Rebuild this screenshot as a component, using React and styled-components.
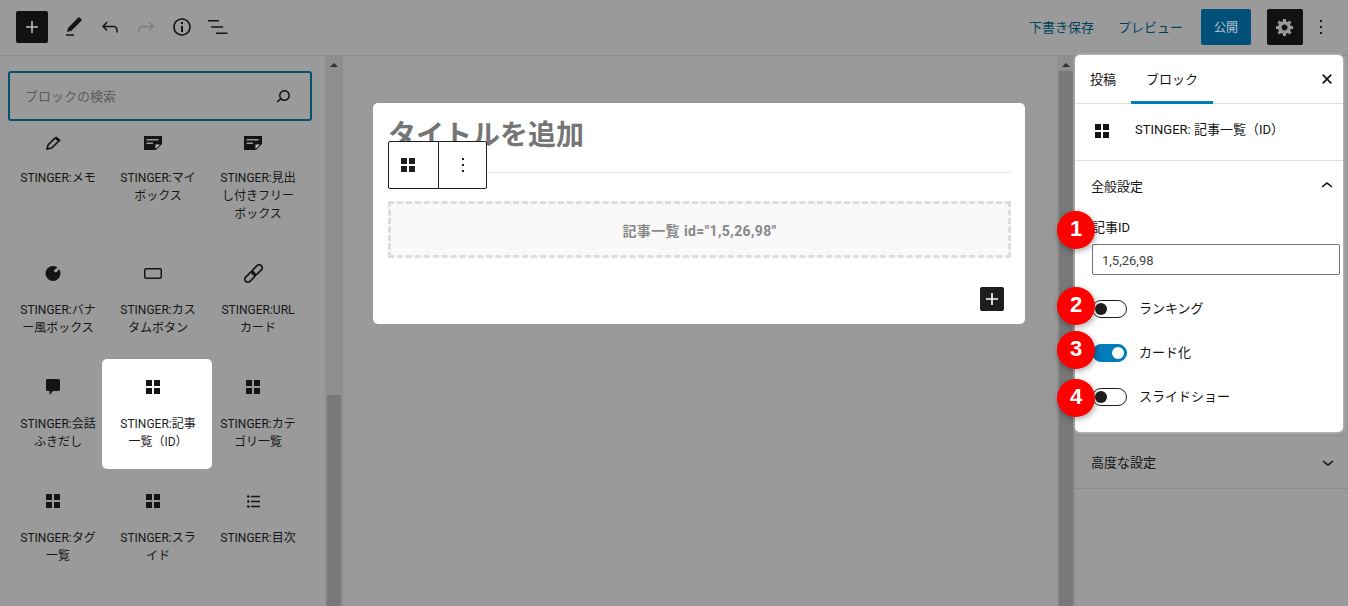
import React from "react"
import styled, { createGlobalStyle } from "styled-components"

const Global = createGlobalStyle`
  html, body, #root {
    height: 100%;
    margin: 0;
  }
  body {
    overflow: hidden;
    background: #9a9a9a;
    font-family: Roboto, "Noto Sans CJK JP", sans-serif;
    color: #141414;
    font-size: 13px;
  }
  * { box-sizing: border-box; }
`

const Page = styled.div`
  height: 100vh;
  display: flex;
  flex-direction: column;
`

const Header = styled.header`
  height: 56px;
  flex: none;
  display: flex;
  align-items: center;
  padding: 0 9px 2px 16px;
  border-bottom: 1px solid #8a8a8a;
`

const ToolGroup = styled.div`
  display: flex;
  align-items: center;
`

const InsertButton = styled.div`
  width: 32px;
  height: 32px;
  margin-right: 8px;
  background: #111;
  color: #bbb;
  border-radius: 2px;
  display: flex;
  align-items: center;
  justify-content: center;
`

const ToolIcon = styled.div`
  width: 36px;
  height: 36px;
  display: flex;
  align-items: center;
  justify-content: center;
  color: ${p => (p.$muted ? "#7c7c7c" : "#141414")};
`

const Actions = styled.div`
  margin-left: auto;
  display: flex;
  align-items: center;
`

const TextAction = styled.span`
  color: #00435f;
  font-size: 13px;
  margin-right: ${p => p.$gap}px;
`

const PublishButton = styled.div`
  width: 50px;
  height: 36px;
  margin-right: 16px;
  background: #00507a;
  color: #b9c9d3;
  border-radius: 2px;
  font-size: 12px;
  display: flex;
  align-items: center;
  justify-content: center;
`

const GearButton = styled.div`
  width: 36px;
  height: 36px;
  background: #111;
  color: #999;
  border-radius: 2px;
  display: flex;
  align-items: center;
  justify-content: center;
`

const Body = styled.div`
  flex: 1;
  min-height: 0;
  display: flex;
`

const Inserter = styled.aside`
  width: 343px;
  flex: none;
  display: flex;
  border-right: 1px solid #8a8a8a;
  overflow: hidden;
`

const InserterContent = styled.div`
  width: 325px;
  flex: none;
  padding: 15px 0 0 8px;
`

const SearchBox = styled.div`
  position: relative;
  width: 304px;
  height: 50px;
  border: 2px solid #00506f;
  border-radius: 3px;
  display: flex;
  align-items: center;
  padding: 0 15px 0 15px;
`

const SearchInput = styled.input`
  flex: 1;
  min-width: 0;
  border: 0;
  outline: 0;
  padding: 0;
  background: transparent;
  font: inherit;
  color: #141414;
  &::placeholder { color: #5c5c5c; opacity: 1; }
`

const BlockGrid = styled.div`
  margin-top: -6px;
  display: grid;
  grid-template-columns: repeat(3, 100px);
  grid-template-rows: 130px 114px 114px 114px;
`

const BlockCell = styled.div`
  position: relative;
  padding-top: 18px;
  display: flex;
  flex-direction: column;
  align-items: center;
  text-align: center;

  ${p => p.$active && `
    &::before {
      content: "";
      position: absolute;
      top: 0;
      left: -6px;
      width: 110px;
      height: 110px;
      background: #fff;
      border-radius: 5px;
    }
  `}
`

const BlockIcon = styled.div`
  position: relative;
  width: 24px;
  height: 20px;
  margin-left: -10px;
  display: flex;
  align-items: center;
  justify-content: center;
  color: #141414;
`

const BlockLabel = styled.div`
  position: relative;
  margin-top: ${p => (p.$tight ? 16 : 18)}px;
  width: 96px;
  font-size: 12px;
  line-height: 18px;
  word-spacing: -3px;
  white-space: pre-line;
  color: ${p => (p.$active ? "#1e1e1e" : "#161616")};
`

const ScrollTrack = styled.div`
  width: 17px;
  flex: none;
  display: flex;
  flex-direction: column;
  align-items: center;
  background: #8f8f8f;
`

const ScrollArrow = styled.div`
  flex: none;
  width: 0;
  height: 0;
  margin: 7px 0 ${p => p.$after}px;
  border-left: 4px solid transparent;
  border-right: 4px solid transparent;
  border-bottom: 4px solid #303030;
`

const ScrollThumb = styled.div`
  width: 14px;
  flex: 1;
  background: #787878;
`

const Canvas = styled.main`
  flex: 1;
  min-width: 0;
  padding: 47px 0 0 30px;
`

const EditorCard = styled.section`
  position: relative;
  width: 652px;
  height: 221px;
  padding: 0 14px 0 15px;
  background: #fff;
  border-radius: 5px;
`

const TitleWrap = styled.div`
  height: 70px;
  padding-top: 13px;
  border-bottom: 1px solid #e6e6e6;
`

const PostTitle = styled.h1`
  margin: 0;
  font-size: 28px;
  line-height: 40px;
  font-weight: 700;
  color: #757575;
`

const BlockToolbar = styled.div`
  position: absolute;
  top: 38px;
  left: 15px;
  width: 99px;
  height: 48px;
  display: flex;
  background: #fff;
  border: 1px solid #1e1e1e;
  border-radius: 2px;
`

const ToolbarSlot = styled.div`
  flex: none;
  width: 49px;
  display: flex;
  align-items: center;
  justify-content: center;
  padding-right: ${p => p.$shift || 0}px;
  color: #1e1e1e;
  & + & { border-left: 1px solid #1e1e1e; }
`

const Placeholder = styled.div`
  margin-top: 28px;
  height: 57px;
  background: #f9f9f9;
  border: 3px dashed #ddd;
  display: flex;
  align-items: center;
  justify-content: center;
  color: #888;
  font-size: 14px;
  font-weight: 700;
  letter-spacing: 0.4px;
`

const CardFooter = styled.div`
  margin-top: 29px;
  display: flex;
  justify-content: flex-end;
  padding-right: 7px;
`

const AddBlock = styled.div`
  width: 24px;
  height: 24px;
  background: #1e1e1e;
  color: #fff;
  border-radius: 2px;
  display: flex;
  align-items: center;
  justify-content: center;
`

const Settings = styled.aside`
  width: 274px;
  flex: none;
  border-left: 1px solid #8a8a8a;
`

const SpotCard = styled.div`
  position: relative;
  width: 268px;
  height: 377px;
  margin-top: -1px;
  background: #fff;
  border-radius: 5px;
  box-shadow: 0 0 3px rgba(255, 255, 255, 0.7);
`

const Tabs = styled.div`
  height: 49px;
  display: flex;
  align-items: stretch;
  border-bottom: 1px solid #e0e0e0;
  padding-left: 15px;
`

const Tab = styled.div`
  display: flex;
  align-items: center;
  width: ${p => p.$width}px;
  padding-left: ${p => p.$pad}px;
  height: 49px;
  border-bottom: 3px solid ${p => (p.$active ? "#007cba" : "transparent")};
`

const CloseIcon = styled.div`
  margin-left: auto;
  margin-right: 11px;
  display: flex;
  align-items: center;
  padding-bottom: 1px;
`

const BlockCardRow = styled.div`
  height: 57px;
  display: flex;
  align-items: flex-start;
  padding: 20px 0 0 20px;
  border-bottom: 1px solid #e0e0e0;
`

const BlockName = styled.span`
  margin-left: 26px;
  margin-top: -3px;
  line-height: 18px;
`

const PanelHead = styled.div`
  height: ${p => p.$height}px;
  display: flex;
  align-items: center;
  justify-content: space-between;
  padding: 0 4px 0 16px;
`

const PanelTitle = styled.span`
  margin-top: -2px;
`

const FieldList = styled.div`
  padding-left: 17px;
`

const Field = styled.div`
  position: relative;
`

const FieldLabel = styled.div`
  line-height: 18px;
  margin-top: 8px;
  margin-bottom: 7px;
`

const IdInput = styled.input`
  display: block;
  width: 248px;
  height: 31px;
  padding: 1px 9px 0;
  border: 1px solid #757575;
  border-radius: 2px;
  font: inherit;
  color: #444;
  outline: 0;
`

const ToggleRow = styled.div`
  position: relative;
  height: 18px;
  margin-top: ${p => p.$top}px;
  display: flex;
  align-items: center;
`

const ToggleLabel = styled.span`
  margin-top: -4px;
`

const Track = styled.span`
  position: relative;
  flex: none;
  width: 35px;
  height: 18px;
  margin-right: 12px;
  border-radius: 9px;
  border: 1px solid ${p => (p.$on ? "#007cba" : "#1e1e1e")};
  background: ${p => (p.$on ? "#007cba" : "#fff")};
`

const Knob = styled.span`
  position: absolute;
  top: 2px;
  left: ${p => (p.$on ? 19 : 2)}px;
  width: 12px;
  height: 12px;
  border-radius: 50%;
  background: ${p => (p.$on ? "#fff" : "#1e1e1e")};
`

const Badge = styled.span`
  position: absolute;
  left: -35px;
  top: ${p => p.$top}px;
  width: 38px;
  height: 38px;
  border-radius: 50%;
  background: #f00;
  color: #fff;
  font-family: "Liberation Sans", sans-serif;
  font-weight: 700;
  font-size: 22px;
  display: flex;
  align-items: center;
  justify-content: center;
  padding-bottom: 3px;
  box-shadow: 1px 2px 6px rgba(0, 0, 0, 0.35);
`

const CollapsedPanel = styled.div`
  margin-top: 3px;
  height: 54px;
  border-top: 1px solid #8a8a8a;
  border-bottom: 1px solid #8a8a8a;
  display: flex;
  align-items: center;
  justify-content: space-between;
  padding: 0 8px 0 16px;
`

const Svg = ({ d, size = 24, box = 24 }) => (
  <svg width={size} height={size} viewBox={`0 0 ${box} ${box}`} fill="currentColor">
    <path d={d} />
  </svg>
)

const PLUS = "M18 11.2h-5.2V6h-1.6v5.2H6v1.6h5.2V18h1.6v-5.2H18z"
const EDIT = "M20.1 5.1L16.9 2 6.2 12.7l-1.3 4.4 4.5-1.3L20.1 5.1zM4 20.8h8v-1.5H4v1.5z"
const UNDO = "M18.3 11.7c-.6-.6-1.4-.9-2.3-.9H6.7l2.9-3.3-1.1-1-4.5 5L8.5 16l1-1-2.7-2.7H16c.5 0 .9.2 1.3.5 1 1 1 3.4 1 4.5v.3h1.5v-.2c0-1.5 0-4.3-1.5-5.7z"
const REDO = "M15.6 6.5l-1.1 1 2.9 3.3H8c-.9 0-1.7.3-2.3.9-1.4 1.5-1.4 4.2-1.4 5.6v.2h1.5v-.3c0-1.1 0-3.5 1-4.5.3-.3.7-.5 1.3-.5h9.2L14.5 15l1.1 1.1 4.6-4.6-4.6-5z"
const INFO = "M12 3.2c-4.8 0-8.8 3.9-8.8 8.8 0 4.8 3.9 8.8 8.8 8.8 4.8 0 8.8-3.9 8.8-8.8 0-4.8-4-8.8-8.8-8.8zm0 16c-4 0-7.2-3.3-7.2-7.2C4.8 8 8 4.8 12 4.8s7.2 3.3 7.2 7.2c0 4-3.2 7.2-7.2 7.2zM11 17h2v-6h-2v6zm0-8h2V7h-2v2z"
const LIST = "M2 5h11v1.5H2zM5 11.2h12v1.5H5zM10 17.5h11.5V19H10z"
const MORE = "M13 19h-2v-2h2v2zm0-6h-2v-2h2v2zm0-6h-2V5h2v2z"
const GEAR = "M18 12h-2.18c-.17.7-.44 1.35-.81 1.93l1.54 1.54-2.1 2.1-1.54-1.54c-.58.36-1.23.63-1.91.79V19H8v-2.18c-.68-.16-1.33-.43-1.91-.79l-1.54 1.54-2.12-2.12 1.54-1.54c-.36-.58-.63-1.23-.79-1.91H1V9.03h2.17c.16-.7.44-1.35.8-1.94L2.43 5.55l2.1-2.1 1.54 1.54c.58-.37 1.24-.64 1.93-.81V2h3v2.18c.68.16 1.33.43 1.91.79l1.54-1.54 2.12 2.12-1.54 1.54c.36.59.64 1.24.8 1.94H18V12zm-8.5 1.5c1.66 0 3-1.34 3-3s-1.34-3-3-3-3 1.34-3 3 1.34 3 3 3z"
const SEARCH = "M13.5 6C10.5 6 8 8.5 8 11.5c0 1.1.3 2.1.9 3l-3.4 3 1 1.1 3.4-2.9c1 .9 2.2 1.4 3.6 1.4 3 0 5.5-2.5 5.5-5.5C19 8.5 16.5 6 13.5 6zm0 9.5c-2.2 0-4-1.8-4-4s1.8-4 4-4 4 1.8 4 4-1.8 4-4 4z"
const UP = "M6.5 12.4L12 8l5.5 4.4-.9 1.2L12 10l-4.5 3.6-1-1.2z"
const DOWN = "M17.5 11.6L12 16l-5.5-4.4.9-1.2L12 14l4.5-3.6 1 1.2z"

const CrossIcon = () => (
  <svg width="10" height="10" viewBox="0 0 10 10" fill="none" stroke="currentColor" strokeWidth="1.7">
    <path d="M.7.7l8.6 8.6M9.3.7L.7 9.3" />
  </svg>
)

const GridIcon = () => (
  <svg width="14" height="14" viewBox="0 0 14 14" fill="currentColor">
    <rect width="6" height="6" />
    <rect x="8" width="6" height="6" />
    <rect y="8" width="6" height="6" />
    <rect x="8" y="8" width="6" height="6" />
  </svg>
)

const PencilIcon = () => (
  <svg width="15" height="14" viewBox="0 0 15 14">
    <path fill="none" stroke="currentColor" strokeWidth="1.6" d="M1 13l1.2-4.3L9.3 1.9l3.5 3.1-7.1 7z" />
    <path fill="currentColor" d="M10.3.4l4.4 3.6-1.6 1.8-4.2-3.7z" />
  </svg>
)

const NoteIcon = () => (
  <svg width="18" height="14" viewBox="0 0 18 14">
    <path fill="currentColor" d="M0 0h18v8l-6 6H0z" />
    <path fill="#9a9a9a" d="M2.5 3h12v1.5h-12zM2.500 6.500H9V8H2.500z" />
    <path fill="#bdbdbd" d="M11.5 13V8.500H16z" />
  </svg>
)

const BlobIcon = () => (
  <svg width="16" height="16" viewBox="0 0 16 16">
    <circle cx="8" cy="8.5" r="7.5" fill="currentColor" />
    <ellipse cx="11.5" cy="5" rx="3" ry="1.5" fill="#9a9a9a" transform="rotate(-40 11.5 5)" />
  </svg>
)

const ButtonIcon = () => (
  <svg width="18" height="11" viewBox="0 0 18 11" fill="none" stroke="currentColor" strokeWidth="1.5">
    <rect x="0.75" y="0.75" width="16.5" height="9.5" rx="1.5" />
  </svg>
)

const ChainIcon = () => (
  <svg width="19" height="19" viewBox="0 0 19 19" fill="none" stroke="currentColor" strokeWidth="1.7">
    <g transform="rotate(-45 9.5 9.5)">
      <rect x="-1.5" y="6.5" width="12" height="6" rx="3" />
      <rect x="8.5" y="6.5" width="12" height="6" rx="3" />
    </g>
  </svg>
)

const BubbleIcon = () => (
  <svg width="14" height="16" viewBox="0 0 14 16" fill="currentColor">
    <path d="M1.5 0h11A1.5 1.5 0 0 1 14 1.5v9a1.5 1.5 0 0 1-1.5 1.5H7l-3.5 4v-4h-2A1.5 1.5 0 0 1 0 10.5v-9A1.5 1.5 0 0 1 1.5 0z" />
  </svg>
)

const TocIcon = () => (
  <svg width="13" height="13" viewBox="0 0 13 13" fill="currentColor">
    <circle cx="1.3" cy="1.5" r="1.3" />
    <circle cx="1.3" cy="6.5" r="1.3" />
    <circle cx="1.3" cy="11.5" r="1.3" />
    <path d="M4 .8h9v1.4H4zM4 5.8h9v1.4H4zM4 10.8h9v1.4H4z" />
  </svg>
)

const blocks = [
  { icon: <PencilIcon />, label: "STINGER: メモ", tight: true },
  { icon: <NoteIcon />, label: "STINGER: マイ\nボックス", tight: true },
  { icon: <NoteIcon />, label: "STINGER: 見出\nし付きフリー\nボックス", tight: true },
  { icon: <BlobIcon />, label: "STINGER: バナ\nー風ボックス" },
  { icon: <ButtonIcon />, label: "STINGER: カス\nタムボタン" },
  { icon: <ChainIcon />, label: "STINGER: URL\nカード" },
  { icon: <BubbleIcon />, label: "STINGER: 会話\nふきだし" },
  { icon: <GridIcon />, label: "STINGER: 記事\n一覧（ID）", active: true },
  { icon: <GridIcon />, label: "STINGER: カテ\nゴリ一覧" },
  { icon: <GridIcon />, label: "STINGER: タグ\n一覧" },
  { icon: <GridIcon />, label: "STINGER: スラ\nイド" },
  { icon: <TocIcon />, label: "STINGER: 目次" },
]

const toggles = [
  { n: 2, label: "ランキング", on: false, top: 25, badge: -13 },
  { n: 3, label: "カード化", on: true, top: 26, badge: -13 },
  { n: 4, label: "スライドショー", on: false, top: 26, badge: -9 },
]

export default function App() {
  return (
    <Page>
      <Global />
      <Header>
        <ToolGroup>
          <InsertButton><Svg d={PLUS} /></InsertButton>
          <ToolIcon><Svg d={EDIT} /></ToolIcon>
          <ToolIcon><Svg d={UNDO} /></ToolIcon>
          <ToolIcon $muted><Svg d={REDO} /></ToolIcon>
          <ToolIcon><Svg d={INFO} /></ToolIcon>
          <ToolIcon><Svg d={LIST} /></ToolIcon>
        </ToolGroup>
        <Actions>
          <TextAction $gap={24}>下書き保存</TextAction>
          <TextAction $gap={18}>プレビュー</TextAction>
          <PublishButton>公開</PublishButton>
          <GearButton><Svg d={GEAR} size={20} box={20} /></GearButton>
          <ToolIcon><Svg d={MORE} /></ToolIcon>
        </Actions>
      </Header>
      <Body>
        <Inserter>
          <InserterContent>
            <SearchBox>
              <SearchInput placeholder="ブロックの検索" readOnly />
              <Svg d={SEARCH} />
            </SearchBox>
            <BlockGrid>
              {blocks.map(b => (
                <BlockCell key={b.label} $active={b.active}>
                  <BlockIcon>{b.icon}</BlockIcon>
                  <BlockLabel $active={b.active} $tight={b.tight}>{b.label}</BlockLabel>
                </BlockCell>
              ))}
            </BlockGrid>
          </InserterContent>
          <ScrollTrack>
            <ScrollArrow $after={328} />
            <ScrollThumb />
          </ScrollTrack>
        </Inserter>
        <Canvas>
          <EditorCard>
            <TitleWrap>
              <PostTitle>タイトルを追加</PostTitle>
            </TitleWrap>
            <BlockToolbar>
              <ToolbarSlot $shift={11}><GridIcon /></ToolbarSlot>
              <ToolbarSlot><Svg d={MORE} /></ToolbarSlot>
            </BlockToolbar>
            <Placeholder>記事一覧 id="1,5,26,98"</Placeholder>
            <CardFooter>
              <AddBlock><Svg d={PLUS} /></AddBlock>
            </CardFooter>
          </EditorCard>
        </Canvas>
        <ScrollTrack>
          <ScrollArrow $after={4} />
          <ScrollThumb />
        </ScrollTrack>
        <Settings>
          <SpotCard>
            <Tabs>
              <Tab $width={41}>投稿</Tab>
              <Tab $active $width={82} $pad={15}>ブロック</Tab>
              <CloseIcon><CrossIcon /></CloseIcon>
            </Tabs>
            <BlockCardRow>
              <GridIcon />
              <BlockName>STINGER: 記事一覧（ID）</BlockName>
            </BlockCardRow>
            <PanelHead $height={50}>
              <PanelTitle>全般設定</PanelTitle>
              <Svg d={UP} />
            </PanelHead>
            <FieldList>
              <Field>
                <FieldLabel>記事ID</FieldLabel>
                <IdInput value="1,5,26,98" readOnly />
                <Badge $top={-8}>1</Badge>
              </Field>
              {toggles.map(t => (
                <ToggleRow key={t.n} $top={t.top}>
                  <Track $on={t.on}><Knob $on={t.on} /></Track>
                  <ToggleLabel>{t.label}</ToggleLabel>
                  <Badge $top={t.badge}>{t.n}</Badge>
                </ToggleRow>
              ))}
            </FieldList>
          </SpotCard>
          <CollapsedPanel>
            <PanelTitle>高度な設定</PanelTitle>
            <Svg d={DOWN} />
          </CollapsedPanel>
        </Settings>
      </Body>
    </Page>
  )
}
